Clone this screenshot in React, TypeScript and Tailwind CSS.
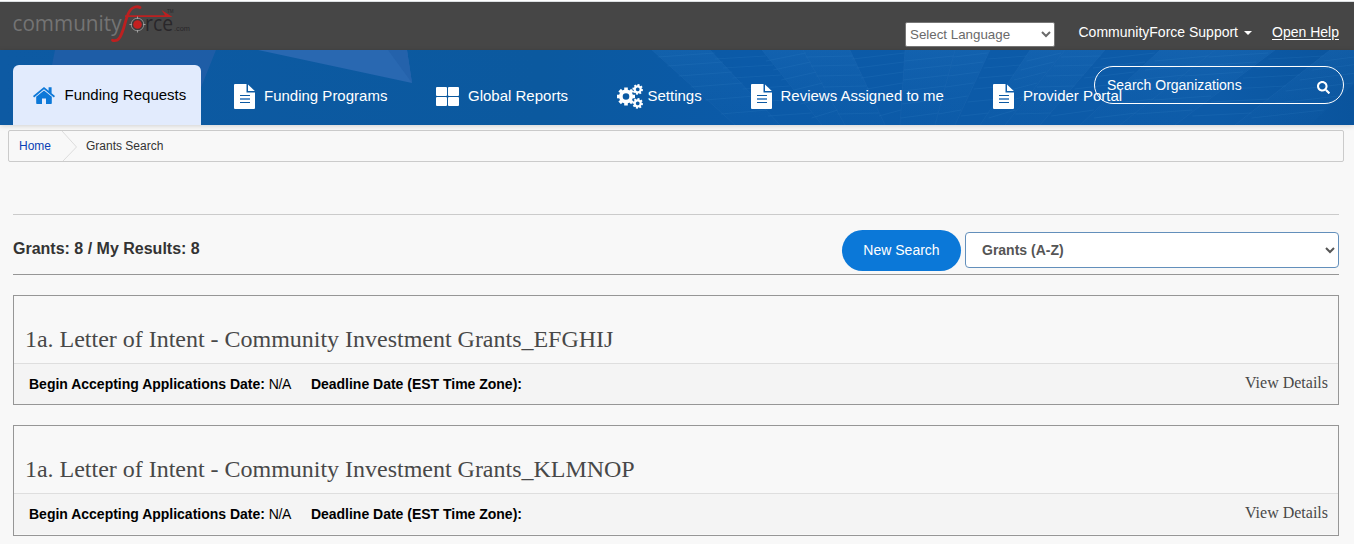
import React from "react";
import { FaSearch } from "react-icons/fa";

function Logo() {
  return (
    <svg className="block h-[44px] w-[190px]" viewBox="0 0 190 44" aria-label="communityforce.com">
      <g fontFamily="'Open Sans', 'Noto Sans', sans-serif">
        <text x="-0.5" y="28.500" fontSize="22.500" fill="#747474" fontWeight="400" textLength="109" lengthAdjust="spacingAndGlyphs">
          community
        </text>
        <text x="132" y="28.500" fontSize="22.500" fill="#29272a" textLength="28" lengthAdjust="spacingAndGlyphs">
          rce
        </text>
      </g>
      <text x="161" y="28.500" fontSize="8" fill="#29272a" fontFamily="'Liberation Sans', Arial, sans-serif" textLength="16" lengthAdjust="spacingAndGlyphs">
        .com
      </text>
      <text x="154" y="10.500" fontSize="4.500" fill="#29272a" fontFamily="'Liberation Sans', Arial, sans-serif">
        TM
      </text>
      <path d="M99.500 38.300 C106 40.500 108.500 33 111 25 C114 14 116 6.500 122 5 Q125 4.300 127 5.500" fill="none" stroke="#bd2020" strokeWidth="2.800" strokeLinecap="round" />
      <path d="M112 13.300 H152 L148.500 8 L159.500 14.900 H112 Z" fill="#bd2020" />
      <circle cx="124.500" cy="22.500" r="6.300" fill="#3d3b3c" stroke="#8e8e8e" strokeWidth="1" />
      <circle cx="124.500" cy="22.500" r="4.300" fill="#c42020" />
      <path d="M124.500 14.500 v2.500 M124.500 28 v2.500 M116.500 22.500 h2.500 M130 22.500 h2.500" stroke="#a0a0a0" strokeWidth="1" />
    </svg>
  );
}

function HomeIcon() {
  return (
    <svg className="mt-px mr-[9px] h-[17px] w-[22px]" viewBox="0 0 22 17" fill="#0c78d8">
      <path d="M11 0 L15.600 3.700 V0.300 H18.600 V6.200 L22 9.100 L20.900 10.400 L11 2.300 L1.100 10.400 L0 9.100 Z" />
      <path d="M11 3.400 L18.800 9.800 V16.200 Q18.800 17 18 17 H13 V11.500 H9 V17 H4 Q3.200 17 3.200 16.200 V9.800 Z" />
    </svg>
  );
}

function DocIcon() {
  return (
    <svg className="h-[25px] w-[21px]" viewBox="0 0 21 25">
      <path d="M1 0 H12.500 V8.500 H21 V24 Q21 25 20 25 H1 Q0 25 0 24 V1 Q0 0 1 0 Z" fill="#fff" />
      <path d="M14 0.500 L20.800 7 H14 Z" fill="#fff" />
      <path d="M6 11.500 H16 M6 18.500 H16" stroke="#0c59a3" strokeWidth="1" />
      <path d="M6 15 H16" stroke="#5e94ca" strokeWidth="2" />
    </svg>
  );
}

function GridIcon() {
  return (
    <svg className="h-[19px] w-[23px]" viewBox="0 0 23 19" fill="#fff">
      <rect width="11" height="9" rx="1" />
      <rect x="12" width="11" height="9" rx="1" />
      <rect y="10" width="11" height="9" rx="1" />
      <rect x="12" y="10" width="11" height="9" rx="1" />
    </svg>
  );
}

function Gear({ x, y, r, hole, tooth, turn }: { x: number; y: number; r: number; hole: number; tooth: number; turn: number }) {
  const ring = r * 0.78;
  return (
    <g transform={`translate(${x} ${y}) rotate(${turn})`}>
      <circle r={(ring + hole) / 2} fill="none" stroke="#fff" strokeWidth={ring - hole} />
      {[0, 45, 90, 135, 180, 225, 270, 315].map((angle) => (
        <rect key={angle} x={-tooth / 2} y={-r} width={tooth} height={r - ring + 0.8} fill="#fff" transform={`rotate(${angle})`} />
      ))}
    </g>
  );
}

function GearsIcon() {
  return (
    <svg className="h-[25px] w-[26px]" viewBox="0 0 26 25">
      <Gear x={9} y={12.5} r={9} hole={3.3} tooth={3.6} turn={0} />
      <Gear x={20.7} y={5.4} r={5.3} hole={1.9} tooth={2.1} turn={10} />
      <Gear x={20.7} y={19.4} r={5.3} hole={1.9} tooth={2.1} turn={10} />
    </svg>
  );
}

function BannerTexture() {
  // Each ray is [x at the top edge, x at the bottom edge].
  const rays = [
    [652, 735], [710, 780], [762, 822], [803, 845], [850, 885], [905, 900], [955, 935],
    [990, 955], [1030, 980], [1065, 1005], [1105, 1040], [1160, 1080], [1215, 1120], [1275, 1175], [1330, 1235], [1390, 1310],
  ];
  const strips = [5, 14, 24, 35, 48, 62];
  return (
    <svg className="absolute inset-0 h-full w-full" viewBox="0 0 1354 75" preserveAspectRatio="none">
      <defs>
        <linearGradient id="sky">
          <stop offset="0" stopColor="#0d5aa3" />
          <stop offset="0.4" stopColor="#0b599f" />
          <stop offset="0.55" stopColor="#0b5aa8" />
          <stop offset="0.9" stopColor="#0d5ba8" />
          <stop offset="1" stopColor="#0a549d" />
        </linearGradient>
        <linearGradient id="glow" x1="0" y1="0" x2="0" y2="1">
          <stop offset="0" stopColor="#2a7ac5" stopOpacity="0.22" />
          <stop offset="1" stopColor="#1767b2" stopOpacity="0.06" />
        </linearGradient>
      </defs>
      <rect width="1354" height="75" fill="url(#sky)" />
      <path d="M55 0 H216 L200 40 V75 H40 Z" fill="#245fa8" opacity="0.75" />
      <path d="M258 0 H407 L412 33 Z" fill="#2968b1" />
      <path d="M388 0 H407 L412 33 Z" fill="#2462ab" />
      {rays.map(([top, bottom], i) =>
        i < rays.length - 1 ? (
          <g key={top}>
            {i % 3 !== 1 && (
              <path d={`M${top} 0 H${rays[i + 1][0]} L${rays[i + 1][1]} 75 H${bottom} Z`} fill="url(#glow)" />
            )}
            <path d={`M${top} 0 L${bottom} 75`} stroke="#2b75bb" strokeOpacity="0.2" strokeWidth="1" />
            {strips.map((y) => {
              const f = y / 75;
              const a = top + (bottom - top) * f;
              const b = rays[i + 1][0] + (rays[i + 1][1] - rays[i + 1][0]) * f;
              return (
                <path key={y} d={`M${a} ${y + 2 + (i % 3) * 2} L${b} ${y - 2 + (i % 2) * 3}`} stroke="#3a83c7" strokeOpacity="0.18" />
              );
            })}
          </g>
        ) : null,
      )}
    </svg>
  );
}

const navItems = [
  { label: "Funding Programs", icon: <DocIcon />, box: "w-[202px]", gap: "gap-[9px]" },
  { label: "Global Reports", icon: <GridIcon />, box: "w-[181px]", gap: "gap-[9px]" },
  { label: "Settings", icon: <GearsIcon />, box: "w-[133.5px]", gap: "gap-[4.5px]" },
  { label: "Reviews Assigned to me", icon: <DocIcon />, box: "w-[242.5px]", gap: "gap-[9px]" },
  { label: "Provider Portal", icon: <DocIcon />, box: "w-[140px]", gap: "gap-[9px]" },
];

function GrantCard({ title }: { title: string }) {
  return (
    <article className="mx-[13px] mr-[15px] border border-[#969696]">
      <h2 className="flex h-[67px] items-end pb-[10px] pl-[11px] font-['Liberation_Serif',serif] text-[24px] leading-7 tracking-[-0.015px] whitespace-pre text-[#484848]">
        {title}
      </h2>
      <div className="flex h-[41px] border-t border-[#dedede] bg-[#f4f4f4] pt-[10px] pr-[10px] pl-[15px] text-[14px] leading-5 tracking-[-0.01px] text-black">
        <p>
          <b>Begin Accepting Applications Date:</b> <span className="tracking-[-0.4px]">N/A</span>
        </p>
        <b className="ml-5">Deadline Date (EST Time Zone):</b>
        <a className="ml-auto font-['Liberation_Serif',serif] text-[16px] leading-[18px] tracking-normal text-[#484848]">View Details</a>
      </div>
    </article>
  );
}

export default function App() {
  return (
    <div className="h-[544px] overflow-hidden bg-[#f8f8f8] font-['Liberation_Sans',Arial,sans-serif]">
      <div className="h-[2px] border-b border-[#dcdfe2] bg-white" />
      <header className="flex h-12 bg-[#464646] pl-[13px] text-white">
        <Logo />
        <select className="mt-5 ml-[702px] h-[25px] w-[150px] rounded-[2px] border border-[#767676] bg-white text-[13.333px] text-[#6a6a6a]">
          <option>Select Language</option>
        </select>
        <div className="mt-5 ml-[23.5px] flex h-5 items-center text-[14px] whitespace-nowrap">
          <span>CommunityForce Support</span>
          <span className="mt-[2px] ml-[6px] border-x-4 border-t-4 border-x-transparent border-t-white" />
        </div>
        <a className="mt-5 ml-5 text-[14px] leading-5 whitespace-nowrap underline underline-offset-2">Open Help</a>
      </header>

      <nav className="relative h-[75px] shadow-[0_1px_5px_rgba(0,0,0,0.16)]">
        <BannerTexture />
        <div className="relative flex h-full items-end pl-[13px] text-[15px] whitespace-nowrap text-white">
          <a className="mr-[33px] flex h-[60px] w-[188px] items-center rounded-t-[6px] bg-[#e2ebfd] pl-5 text-black">
            <HomeIcon />
            <span className="ml-[0.5px]">Funding Requests</span>
          </a>
          {navItems.map((item) => (
            <a key={item.label} className={`flex h-[58px] shrink-0 items-center ${item.box} ${item.gap}`}>
              {item.icon}
              <span>{item.label}</span>
            </a>
          ))}
        </div>
        <div className="absolute top-4 right-[10px] flex h-[38px] w-[250px] items-center justify-between rounded-full border border-white pr-[13px] pl-3 text-[14px] text-white">
          Search Organizations
          <FaSearch className="mt-1 h-[13px] w-[13px]" />
        </div>
      </nav>

      <main>
        <div className="mt-[5px] mr-[10px] ml-2 flex h-8 rounded-[2px] border border-[#cbcbcb] pl-[10px] text-[12px] leading-[30px] text-[#333]">
          <a className="w-[42px] text-[#0a3fb5]">Home</a>
          <svg className="h-[30px] w-[17px]" viewBox="0 0 17 30">
            <path d="M1 0 L15.500 16 L2 30" fill="none" stroke="#dcdcdc" />
          </svg>
          <span className="ml-2">Grants Search</span>
        </div>

        <section className="mt-[52px] mr-[15px] mb-5 ml-[13px] flex h-[61px] border-t border-b border-t-[#cbcbcb] border-b-[#969696]">
          <h1 className="mt-[23px] text-[16px] leading-[22px] font-bold text-[#333]">Grants: 8 / My Results: 8</h1>
          <button className="mt-[15px] ml-auto h-[41px] w-[119px] rounded-full bg-[#0b78d8] text-[14px] text-white">
            New Search
          </button>
          <select className="mt-[17px] ml-1 h-9 w-[374px] rounded-[4px] border border-[#638fbb] bg-white pl-3 text-[14px] font-bold text-[#555]">
            <option>Grants (A-Z)</option>
          </select>
        </section>

        <div className="grid grid-rows-[110px_111px] gap-5">
          <GrantCard title="1a. Letter of Intent - Community Investment Grants_EFGHIJ" />
          <GrantCard title="1a. Letter of Intent - Community Investment Grants_KLMNOP" />
        </div>
      </main>
    </div>
  );
}
